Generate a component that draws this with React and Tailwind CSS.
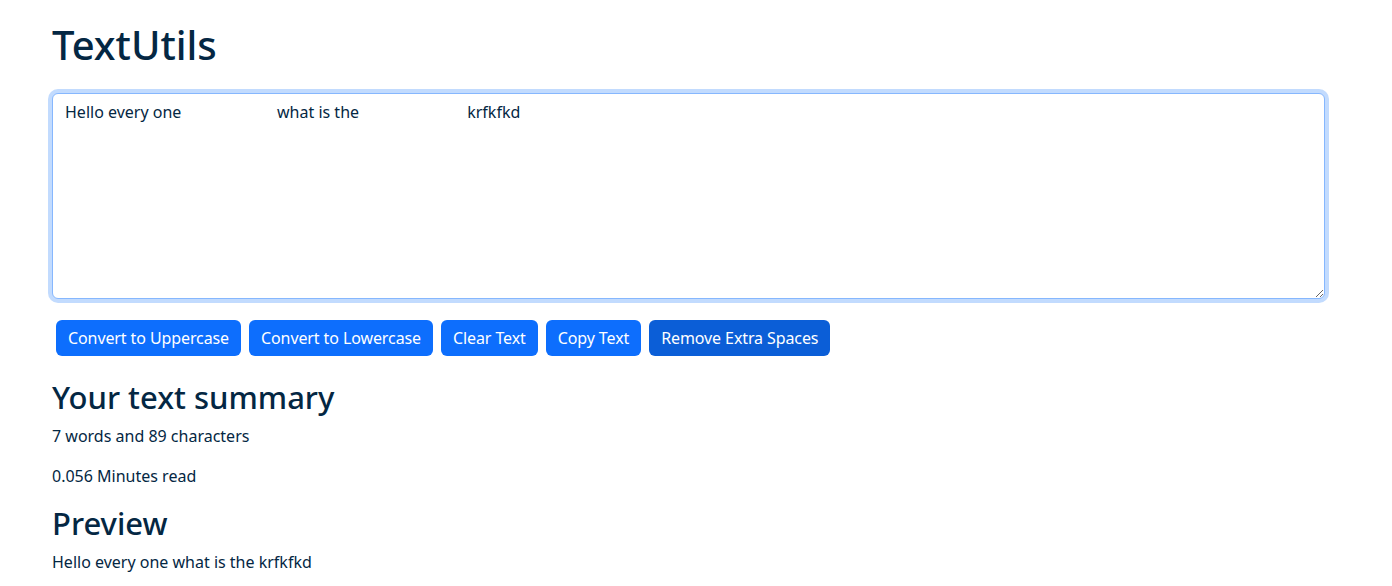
import React, { useEffect, useRef } from 'react';

const text =
  'Hello every one' + ' '.repeat(23) + 'what is the' + ' '.repeat(26) + 'krfkfkd';

const buttons = [
  { label: 'Convert to Uppercase', active: false },
  { label: 'Convert to Lowercase', active: false },
  { label: 'Clear Text', active: false },
  { label: 'Copy Text', active: false },
  { label: 'Remove Extra Spaces', active: true },
];

export default function App() {
  const ref = useRef(null);

  useEffect(() => {
    const el = ref.current;
    if (el) {
      el.focus();
      el.setSelectionRange(text.length, text.length);
    }
  }, []);

  return (
    <div className="min-h-screen bg-white text-[#042743] font-['Noto_Sans',sans-serif]">
      <div className="pl-[52px] pt-[21px]">
        <h1 className="text-[40px] leading-[48px] font-medium mb-[24px]">TextUtils</h1>

        <textarea
          ref={ref}
          rows={8}
          defaultValue={text}
          className="block w-[1273px] h-[206px] px-3 py-[6px] text-[16px] leading-6 text-[#042743] bg-white border border-[#86b7fe] rounded-[6px] shadow-[0_0_0_4px_rgba(13,110,253,0.25)] outline-none whitespace-pre-wrap caret-[#042743]"
        />

        <div className="flex gap-2 px-1 mt-[21px]">
          {buttons.map((b) => (
            <button
              key={b.label}
              className={`h-9 px-3 rounded-[6px] text-white text-[16px] leading-6 tracking-[-0.1px] ${
                b.active ? 'bg-[#0b5ed7]' : 'bg-[#0d6efd]'
              }`}
            >
              {b.label}
            </button>
          ))}
        </div>

        <div className="mt-[22px]">
          <h2 className="text-[31px] leading-[38px] font-medium mb-2">Your text summary</h2>
          <p className="text-[16px] leading-6 mb-4">7 words and 89 characters</p>
          <p className="text-[16px] leading-6 mb-4">0.056 Minutes read</p>
          <h2 className="text-[31px] leading-[38px] font-medium mb-2">Preview</h2>
          <p className="text-[16px] leading-6">Hello every one what is the krfkfkd</p>
        </div>
      </div>
    </div>
  );
}
